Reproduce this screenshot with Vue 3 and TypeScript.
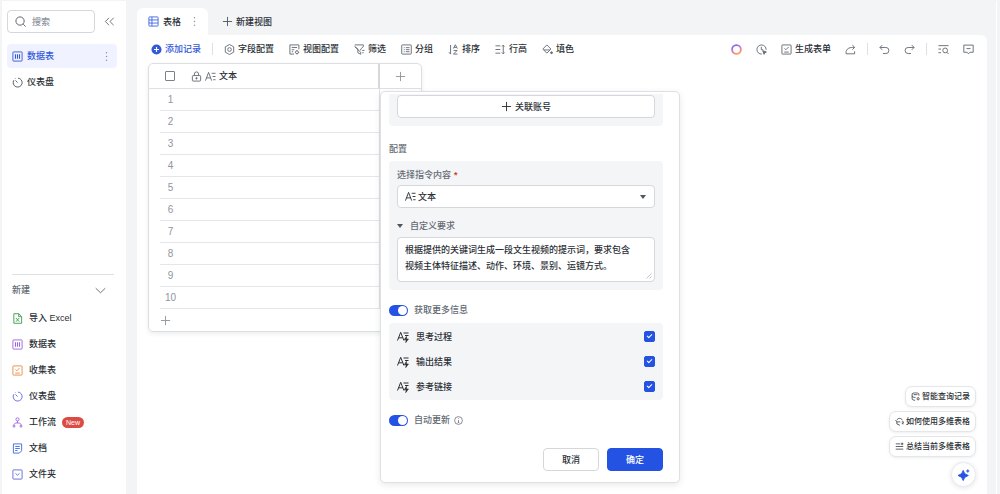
<script setup lang="ts">
import { h, ref, type FunctionalComponent } from 'vue'

const glyphs: Record<string, string> = {
  search: '<circle cx="5.500" cy="5.500" r="4.500"/><path d="m9 9 2.500 2.500"/>',
  collapse: '<path d="M5.500 2 1.500 6l4 4M10.500 2l-4 4 4 4"/>',
  table: '<rect x="1" y="1" width="10" height="10" rx=".6"/><path d="M3.800 3.500v5M6 3.500v5M8.200 3.500v5" stroke-width="1.200"/>',
  sheet: '<rect x="1" y="1" width="10" height="10" rx=".6"/><path d="M4.300 1v10M1 4.300h10M1 7.700h10"/>',
  more: '<g fill="currentColor" stroke="none"><circle cx="6" cy="2" r=".8"/><circle cx="6" cy="6" r=".8"/><circle cx="6" cy="10" r=".8"/></g>',
  dash: '<path d="M6.500 1.200A4.900 4.900 0 1 1 2 3.500M6 6 3.800 3.800M3.800 1.600l-.6.4"/>',
  plus: '<path d="M6 1v10M1 6h10"/>',
  down: '<path d="m.8 3.500 5.200 5 5.200-5"/>',
  excel: '<path d="M2 .8h5.500L10.500 4v7.200H2zM7.300.8V4h3M4.300 5.500l3.600 4M7.900 5.500l-3.600 4"/>',
  form: '<rect x="1" y="1" width="10" height="10" rx=".6"/><path d="m3.800 4.800 1.500 1.500 3-3M3.500 8.800h5"/>',
  flow: '<circle cx="6" cy="2.600" r="1.700"/><path d="M6 4.300v2.200M2.300 9V8l1.500-1.500h4.400L9.700 8v1"/><circle cx="2.200" cy="10" r="1.100"/><circle cx="9.800" cy="10" r="1.100"/>',
  doc: '<path d="M1.500 1h9v7.500L8 11H1.500zM3.500 3.800h5M3.500 6h5M3.500 8.200h2.500"/>',
  folder: '<rect x="1" y="1" width="10" height="10" rx=".6"/><path d="m3.800 4.800 2.200 2 2.200-2"/>',
  add: '<circle cx="6" cy="6" r="5.500" fill="currentColor" stroke="none"/><path d="M6 3.300v5.400M3.300 6h5.400" stroke="#fff" stroke-width="1.200"/>',
  gear: '<path d="M4.300 1.500 6 .5l1.700 1 2.900 1.600v5.800L7.700 10.500l-1.700 1-1.700-1L1.400 8.900V3.100z"/><circle cx="6" cy="6" r="2"/>',
  view: '<path d="M10.800 5.800V1H1v10h4.500M3 3.800h5.800M3 6.300h2.800M3 8.500h1.500"/><circle cx="8.700" cy="9" r="1.600"/><path d="M8.700 6.700v.7M8.700 10.600v.7M6.500 9h.6M10.300 9h.8"/>',
  filter: '<path d="M.8 1h9.400v1.800L7.300 5.500V7M7.300 9v2.200L4.200 9.500v-4L.8 2.800zM9 7h2.500M9 9.500h1.500"/>',
  group: '<rect x=".8" y="1" width="10.400" height="10" rx=".6"/><path d="M3 4h1M3 6.200h1M3 8.400h1M5.300 4h4M5.300 6.200h4M5.300 8.400h4"/>',
  sort: '<path d="M2.800 1v10L.9 9M5.800 5 8 .8 10.200 5M6.600 3.700h2.800M6 7h4L6 11h4.300"/>',
  height: '<path d="M.5 2h5.300M.5 6h5.300M.5 10h5.300M9 1.300v9.400M7.500 2.700 9 1.200l1.500 1.500M7.500 9.300 9 10.800l1.500-1.500"/>',
  fill: '<path d="M5.300 1 9.700 5.500 5.300 10 .9 5.500zM2 6.500h6.500"/><circle cx="10.400" cy="9.500" r="1" fill="currentColor"/>',
  clock: '<path d="M11 6.300A5 5 0 1 0 6.300 11M5.800 3v3.200h2"/><path d="m7.300 7.300 4 1.500-1.700.8-.8 1.700z" fill="currentColor"/>',
  share: '<path d="M1.200 7.800v2.900h9.300V8M1.500 7.500C2.500 4.500 5 3.700 10.300 3.700M8 1.200l2.600 2.500L8 6.200"/>',
  undo: '<path d="M3.500 1.200 1 3.800l2.500 2.600M1.200 3.800h6.300a3.300 3.300 0 0 1 0 6.600H4.300"/>',
  redo: '<path d="M8.500 1.200 11 3.800 8.500 6.400M10.800 3.800H4.500a3.300 3.300 0 0 0 0 6.600h3.200"/>',
  find: '<path d="M.5 1.800h11M.5 5.500h2.800M.5 9.500h2.800"/><circle cx="7.800" cy="7" r="2.600"/><path d="m9.600 8.900 1.900 2"/>',
  comment: '<path d="M.9 1.200h10.200v7.800H7.500L6 10.800 4.500 9H.9zM3.800 5h4.400"/>',
  lock: '<rect x="1.500" y="5" width="9" height="6" rx=".8"/><path d="M3.700 5V3.300a2.300 2.300 0 0 1 4.600 0V5M6 6.800v2.400M4.800 8h2.400"/>',
  text: '<path d="m.5 10.500 3.400-9 3.400 9M1.700 7.500h4.500M7.300 2.500h4.200M8.300 6h3.200M9 9.500h2.500"/>',
  textAi: '<path d="m.5 9.500 3.200-8.200 3.200 8.200M1.700 6.800h4M6.500 2h5M8 4.500h3.500"/><path d="M9.500 5.300 7.200 8.800h1.900l-.4 2.900 2.800-3.800H9.600z" fill="currentColor" stroke-width=".5"/>',
  info: '<circle cx="6" cy="6" r="5.200"/><path d="M6 5.300v3.200M5 8.700h2M6 3v1"/>',
  query: '<path d="M10.500 5V2.500C10.500.8 1.500.8 1.500 2.500v6.800c0 1 1.800 1.700 4 1.700M1.500 5.700c0 1 2 1.500 4.500 1.500M3.500 3.500h5"/><circle cx="9.500" cy="9" r="1.500"/>',
  learn: '<path d="M2.500 4.300C3.500 1 8.500 1 9.800 4.300M.5 4.500 3 6.500h4M2.500 6v3.300L6.500 11M9 6.500h2.500L9.500 9h2"/>',
  summary: '<path d="M1 2.500h6M1 6h10M1 9.500h10M9.500.8v3.400M7.800 2.500h3.400"/>',
  spark: '<path d="M5.200 1.500Q5.900 5.500 10.300 6.500 5.900 7.500 5.200 11.500 4.500 7.500.1 6.500 4.500 5.500 5.200 1.500z" fill="currentColor"/><path d="M9.800.5q.3 1.200 1.500 1.500-1.200.3-1.500 1.500Q9.500 2.300 8.300 2 9.500 1.700 9.800.5z" fill="currentColor" stroke-width=".5"/>',
}

const Icon: FunctionalComponent<{ name: string }> = (props) =>
  h('svg', {
    class: 'icon',
    viewBox: '0 0 12 12',
    fill: 'none',
    stroke: 'currentColor',
    'aria-hidden': 'true',
    innerHTML: glyphs[props.name],
  })
Icon.props = ['name']

const createItems = [
  { icon: 'excel', label: '导入 Excel', tone: 'green' },
  { icon: 'table', label: '数据表', tone: 'purple' },
  { icon: 'form', label: '收集表', tone: 'orange' },
  { icon: 'dash', label: '仪表盘', tone: 'indigo' },
  { icon: 'flow', label: '工作流', tone: 'purple', badge: 'New' },
  { icon: 'doc', label: '文档', tone: 'blue' },
  { icon: 'folder', label: '文件夹', tone: 'indigo' },
]
const tools = [
  { icon: 'gear', label: '字段配置' },
  { icon: 'view', label: '视图配置' },
  { icon: 'filter', label: '筛选' },
  { icon: 'group', label: '分组' },
  { icon: 'sort', label: '排序' },
  { icon: 'height', label: '行高' },
  { icon: 'fill', label: '填色' },
]
const outputs = ref([
  { label: '思考过程', on: true },
  { label: '输出结果', on: true },
  { label: '参考链接', on: true },
])
const suggestions = [
  { icon: 'query', label: '智能查询记录' },
  { icon: 'learn', label: '如何使用多维表格' },
  { icon: 'summary', label: '总结当前多维表格' },
]
const keyword = ref('')
const source = ref('文本')
const moreInfo = ref(true)
const autoUpdate = ref(true)
const prompt = ref('根据提供的关键词生成一段文生视频的提示词，要求包含视频主体特征描述、动作、环境、景别、运镜方式。')
</script>

<template>
  <div class="app">
    <aside class="sidebar">
      <div class="search-row">
        <label class="search">
          <Icon name="search" />
          <input v-model="keyword" type="text" placeholder="搜索" aria-label="搜索" />
        </label>
        <button class="plain muted" aria-label="收起"><Icon name="collapse" /></button>
      </div>
      <nav class="nav">
        <a href="#" class="nav-item active"><Icon name="table" /><span class="grow">数据表</span><Icon name="more" /></a>
        <a href="#" class="nav-item"><Icon name="dash" /><span>仪表盘</span></a>
      </nav>
      <section class="create">
        <button class="create-head"><span>新建</span><Icon name="down" /></button>
        <button v-for="item in createItems" :key="item.label" class="create-item">
          <Icon :name="item.icon" :class="item.tone" />
          <span>{{ item.label }}</span>
          <span v-if="item.badge" class="badge">{{ item.badge }}</span>
        </button>
      </section>
    </aside>

    <div class="workspace">
      <div class="tabs">
        <button class="tab current"><Icon name="sheet" class="blue" /><span>表格</span><Icon name="more" class="dots" /></button>
        <button class="tab"><Icon name="plus" /><span>新建视图</span></button>
      </div>
      <main class="main">
        <div class="toolbar">
          <button class="tool primary"><Icon name="add" />添加记录</button>
          <i class="divider"></i>
          <div class="tool-group">
            <button v-for="tool in tools" :key="tool.icon" class="tool"><Icon :name="tool.icon" />{{ tool.label }}</button>
          </div>
          <div class="tool-group compact end">
            <button class="tool" aria-label="智能助手">
              <svg class="icon" viewBox="0 0 12 12" fill="none" aria-hidden="true">
                <defs>
                  <linearGradient id="halo" x1="0" y1="0" x2=".5" y2="1">
                    <stop offset="0" stop-color="#6d5cf0" />
                    <stop offset=".45" stop-color="#b478dc" />
                    <stop offset="1" stop-color="#ff9a62" />
                  </linearGradient>
                </defs>
                <circle cx="6" cy="6" r="4.800" stroke="url(#halo)" stroke-width="2" />
              </svg>
            </button>
            <button class="tool" aria-label="自动化"><Icon name="clock" /></button>
            <button class="tool"><Icon name="form" />生成表单</button>
            <button class="tool" aria-label="分享"><Icon name="share" /></button>
          </div>
          <i class="divider"></i>
          <div class="tool-group compact">
            <button class="tool" aria-label="撤销"><Icon name="undo" /></button>
            <button class="tool" aria-label="重做"><Icon name="redo" /></button>
          </div>
          <i class="divider"></i>
          <div class="tool-group compact">
            <button class="tool" aria-label="查找"><Icon name="find" /></button>
            <button class="tool" aria-label="评论"><Icon name="comment" /></button>
          </div>
        </div>

        <div class="canvas">
          <table class="grid">
            <thead>
              <tr>
                <th class="col-index"><input type="checkbox" class="pick" aria-label="全选" /></th>
                <th class="col-text"><span class="field"><Icon name="lock" /><Icon name="text" />文本</span></th>
                <th class="col-add"><button class="plain faint" aria-label="添加字段"><Icon name="plus" /></button></th>
              </tr>
            </thead>
            <tbody>
              <tr v-for="n in 10" :key="n"><td class="num"><span>{{ n }}</span></td><td class="cell"></td><td></td></tr>
              <tr><td class="add-row"><button class="plain faint" aria-label="添加行"><Icon name="plus" /></button></td><td></td><td></td></tr>
            </tbody>
          </table>

          <form class="dialog" @submit.prevent>
            <div class="card account"><button type="button" class="btn wide"><Icon name="plus" />关联账号</button></div>
            <h2 class="title">配置</h2>
            <div class="card config">
              <label class="caption" for="source">选择指令内容<b class="required">*</b></label>
              <div class="select-box">
                <Icon name="text" />
                <select id="source" v-model="source"><option>文本</option></select>
                <i class="caret"></i>
              </div>
              <label class="caption custom" for="prompt"><i class="caret"></i>自定义要求</label>
              <div class="prompt-box">
                <textarea id="prompt" v-model="prompt" rows="2"></textarea>
                <svg class="grip" viewBox="0 0 6 6" fill="none" stroke="#a5a9b0" stroke-width=".7" aria-hidden="true"><path d="M.5 5.500l5-5M3.500 5.500l2-2" /></svg>
              </div>
            </div>
            <label class="switch-row"><input v-model="moreInfo" type="checkbox" role="switch" class="switch" />获取更多信息</label>
            <div class="card outputs">
              <label v-for="o in outputs" :key="o.label" class="output">
                <Icon name="textAi" /><span class="grow">{{ o.label }}</span>
                <input v-model="o.on" type="checkbox" class="check" />
              </label>
            </div>
            <label class="switch-row"><input v-model="autoUpdate" type="checkbox" role="switch" class="switch" />自动更新<Icon name="info" class="info" /></label>
            <div class="actions">
              <button type="button" class="btn">取消</button>
              <button type="submit" class="btn solid">确定</button>
            </div>
          </form>
        </div>
      </main>
    </div>

    <div class="assistant">
      <button v-for="s in suggestions" :key="s.label" class="chip"><Icon :name="s.icon" />{{ s.label }}</button>
      <button class="orb" aria-label="智能助手"><Icon name="spark" /></button>
    </div>
  </div>
</template>

<style>
body {
  margin: 0;
  background: #f3f4f6;
}
</style>

<style scoped>
.app {
  position: relative;
  box-sizing: border-box;
  display: flex;
  min-height: 100vh;
  padding: 1px 3px 0 2px;
  background: #f3f4f6;
  color: #2b2f36;
  font: 500 9px/16px "Liberation Sans", "Noto Sans CJK SC", sans-serif;
}
.app *,
.app *::before {
  box-sizing: border-box;
}
button,
input,
select,
textarea {
  margin: 0;
  padding: 0;
  border: 0;
  background: none;
  color: inherit;
  font: inherit;
}
a {
  color: inherit;
  text-decoration: none;
}
.icon {
  display: block;
  flex: none;
  width: 11px;
  height: 11px;
}
.grow {
  flex: 1;
}
.plain {
  display: flex;
}
.muted {
  color: #646a73;
}
.faint {
  color: #8f959e;
}
.blue { color: #3f68e0; }
.green { color: #3c9f4a; }
.purple { color: #9a66dc; }
.orange { color: #e98a45; }
.indigo { color: #6468dc; }

.sidebar {
  display: flex;
  flex: none;
  flex-direction: column;
  width: 124px;
  padding: 9px 9px 7px 5px;
  background: #fff;
}
.search-row {
  display: flex;
  align-items: center;
  gap: 9px;
}
.search {
  display: flex;
  align-items: center;
  gap: 6px;
  width: 88px;
  height: 23px;
  padding: 0 7px;
  border: 1px solid #d5d7db;
  border-radius: 4px;
  color: #51565d;
}
.search input {
  min-width: 0;
  width: 100%;
  outline: 0;
}
.search input::placeholder {
  color: #8f959e;
  opacity: 1;
}
.nav {
  display: flex;
  flex-direction: column;
  gap: 2px;
  margin-top: 11px;
}
.nav-item {
  display: flex;
  align-items: center;
  gap: 4px;
  height: 24px;
  padding: 0 5px;
  border-radius: 4px;
}
.nav-item .icon:first-child {
  color: #51565d;
}
.nav-item.active,
.nav-item.active .icon:first-child {
  color: #3359d8;
}
.nav-item.active {
  background: #f0f3ff;
}
.nav-item.active .icon:last-child {
  color: #8590b5;
}
.create {
  display: flex;
  flex-direction: column;
  margin: auto 3px 0 5px;
  border-top: 1px solid #dee0e3;
}
.create-head {
  display: flex;
  align-items: center;
  justify-content: space-between;
  height: 30px;
  padding-right: 8px;
  color: #646a73;
}
.create-item {
  display: flex;
  align-items: center;
  gap: 6px;
  height: 26px;
}
.badge {
  padding: 0 4px;
  border-radius: 6px;
  background: #dc4b43;
  color: #fff;
  font-size: 7px;
  line-height: 11px;
}

.workspace {
  display: flex;
  flex: 1;
  flex-direction: column;
  min-width: 0;
  padding: 7px 9px 0 11px;
  border-right: 1px solid #fff;
}
.tabs {
  display: flex;
}
.tab {
  display: flex;
  align-items: center;
  gap: 3px;
  height: 27px;
  padding: 0 14px;
}
.tab .icon:first-child:not(.blue) {
  color: #51565d;
}
.tab.current {
  gap: 4px;
  padding: 0 8px 0 11px;
  border-radius: 6px 6px 0 0;
  background: #fff;
}
.tab .dots {
  margin-left: 4px;
  color: #8f959e;
}
.main {
  flex: 1;
  border-radius: 0 6px 0 0;
  background: #fff;
}
.toolbar {
  display: flex;
  align-items: center;
  gap: 11px;
  height: 28px;
  padding: 0 13px 0 14px;
}
.tool-group {
  display: flex;
  gap: 15px;
}
.tool-group.compact {
  gap: 14px;
}
.tool-group.end {
  margin-left: auto;
}
.tool {
  display: flex;
  align-items: center;
  gap: 3px;
  white-space: nowrap;
}
.tool .icon {
  color: #646a73;
}
.tool.primary,
.tool.primary .icon {
  color: #3359d8;
}
.divider {
  width: 1px;
  height: 12px;
  background: #dee0e3;
}

.canvas {
  position: relative;
  padding-left: 11px;
}
.grid {
  width: 274px;
  border: 1px solid #dcdee1;
  border-radius: 5px;
  border-spacing: 0;
  box-shadow: 0 2px 4px rgb(31 35 41 / 8%);
  table-layout: fixed;
}
.grid th,
.grid td {
  height: 22px;
  padding: 0;
  font-weight: 500;
  text-align: left;
}
.grid th {
  height: 25px;
  border-bottom: 1px solid #dee0e3;
}
.col-index {
  width: 42px;
}
.col-add {
  width: 41px;
}
.grid .col-text {
  border-right: 2px solid #d5d7db;
}
.pick {
  display: block;
  width: 10px;
  height: 10px;
  margin-left: 16px;
  border: 1px solid #7c828b;
  border-radius: 1px;
  appearance: none;
}
.field {
  display: flex;
  align-items: center;
  gap: 3px;
}
.field .icon {
  color: #646a73;
}
.col-add .plain {
  margin: auto;
}
.num {
  color: #8f959e;
}
.num span {
  display: flex;
  align-items: center;
  justify-content: center;
  height: 22px;
  margin-left: 11px;
  padding-right: 10px;
  border-bottom: 1px solid #e4e6e9;
  font-size: 10px;
}
.grid .cell {
  border-right: 1px solid #dee0e3;
  border-bottom: 1px solid #e4e6e9;
}
.add-row .plain {
  margin-left: 11px;
}

.dialog {
  position: absolute;
  top: 28px;
  left: 243px;
  width: 300px;
  padding: 2px 16px 11px 8px;
  border: 1px solid #dee0e3;
  border-radius: 5px;
  background: #fff;
  box-shadow: 0 2px 6px rgb(31 35 41 / 10%);
}
.card {
  padding: 0 8px;
  border-radius: 4px;
  background: #f4f5f7;
}
.account {
  padding-top: 1px;
  padding-bottom: 8px;
  border-radius: 0 0 4px 4px;
}
.btn {
  display: flex;
  align-items: center;
  justify-content: center;
  gap: 3px;
  width: 56px;
  height: 23px;
  border: 1px solid #d5d7db;
  border-radius: 4px;
  background: #fff;
}
.btn.wide {
  width: 100%;
}
.btn.solid {
  border-color: #2452e2;
  background: #2452e2;
  color: #fff;
}
.title {
  margin: 15px 0 4px;
  color: #646a73;
  font: inherit;
}
.config {
  padding-top: 6px;
  padding-bottom: 8px;
}
.caption {
  display: flex;
  align-items: center;
  color: #646a73;
}
.required {
  margin-left: 3px;
  color: #d83931;
}
.select-box {
  position: relative;
  display: flex;
  align-items: center;
  height: 23px;
  margin-top: 2px;
  border: 1px solid #d5d7db;
  border-radius: 4px;
  background: #fff;
}
.select-box .icon {
  position: absolute;
  left: 7px;
  pointer-events: none;
}
.select-box select {
  width: 100%;
  height: 100%;
  padding-left: 20px;
  appearance: none;
}
.select-box .caret {
  position: absolute;
  right: 8px;
  pointer-events: none;
}
.caret {
  border: 3px solid transparent;
  border-top: 4px solid #51565d;
  border-bottom: 0;
}
.custom {
  gap: 7px;
  margin-top: 10px;
}
.prompt-box {
  position: relative;
  margin-top: 3px;
}
.prompt-box textarea {
  display: block;
  width: 100%;
  height: 45px;
  padding: 4px 16px 4px 7px;
  border: 1px solid #d5d7db;
  border-radius: 4px;
  outline: 0;
  background: #fff;
  overflow: hidden;
  resize: none;
}
.grip {
  position: absolute;
  right: 3px;
  bottom: 3px;
  width: 6px;
  height: 6px;
}
.switch-row {
  display: flex;
  align-items: center;
  gap: 6px;
  margin-top: 12px;
  color: #646a73;
}
.switch {
  width: 19px;
  height: 11px;
  padding: 1px;
  border-radius: 6px;
  background: #c4c7cc;
  appearance: none;
}
.switch::before {
  display: block;
  width: 9px;
  height: 9px;
  border-radius: 5px;
  background: #fff;
  content: "";
}
.switch:checked {
  background: #2452e2;
}
.switch:checked::before {
  margin-left: 8px;
}
.outputs {
  margin-top: 5px;
  padding-top: 1px;
  padding-bottom: 1px;
}
.output {
  display: flex;
  align-items: center;
  gap: 7px;
  height: 25px;
}
.output .icon {
  width: 12px;
  height: 12px;
}
.check {
  width: 11px;
  height: 11px;
  padding: 2px;
  border: 1px solid #8f959e;
  border-radius: 2px;
  appearance: none;
}
.check:checked {
  border-color: #2452e2;
  background: #2452e2;
}
.check:checked::before {
  display: block;
  width: 5px;
  height: 3px;
  border: solid #fff;
  border-width: 0 0 1px 1px;
  content: "";
  transform: rotate(-45deg);
}
.switch-row .info {
  width: 9px;
  height: 9px;
  margin-left: -2px;
}
.actions {
  display: flex;
  justify-content: flex-end;
  gap: 8px;
  margin-top: 20px;
}

.assistant {
  position: absolute;
  right: 24px;
  bottom: 7px;
  display: flex;
  flex-direction: column;
  align-items: flex-end;
  gap: 4px;
}
.chip {
  display: flex;
  align-items: center;
  gap: 2px;
  height: 21px;
  padding: 0 5px;
  border: 1px solid #e4e6e9;
  border-radius: 7px;
  background: #fff;
  box-shadow: 0 1px 3px rgb(31 35 41 / 8%);
  font-size: 8px;
}
.chip .icon {
  width: 9px;
  height: 9px;
}
.orb {
  display: flex;
  align-items: center;
  justify-content: center;
  width: 25px;
  height: 25px;
  margin-top: 1px;
  border: 1px solid #e8eaed;
  border-radius: 50%;
  background: #fff;
  box-shadow: 0 1px 5px rgb(31 35 41 / 12%);
  color: #2452e2;
}
.orb .icon {
  width: 12px;
  height: 12px;
}
</style>
